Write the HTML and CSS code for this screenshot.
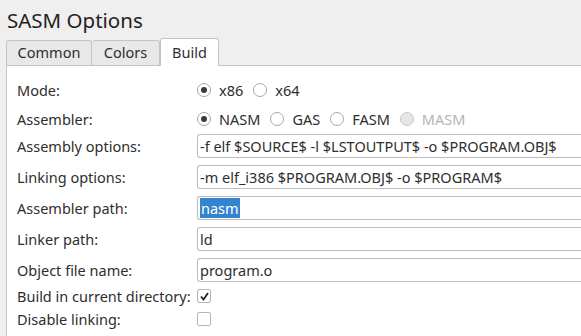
FILE: index.html
```html
<!DOCTYPE html>
<html>
<head>
<meta charset="utf-8">
<link rel="stylesheet" href="styles.css">
</head>
<body>
<div class="window">
  <h1 class="title">SASM Options</h1>
  <div class="tabs">
    <div class="tab">Common</div>
    <div class="tab">Colors</div>
    <div class="tab active">Build</div>
  </div>
  <div class="pane">
    <div class="form">
      <div class="label radio-row">Mode:</div>
      <div class="field radio-row">
        <span class="radio checked"></span><span class="opt">x86</span>
        <span class="radio"></span><span class="opt">x64</span>
      </div>

      <div class="label radio-row">Assembler:</div>
      <div class="field radio-row">
        <span class="radio checked"></span><span class="opt">NASM</span>
        <span class="radio"></span><span class="opt">GAS</span>
        <span class="radio"></span><span class="opt">FASM</span>
        <span class="radio disabled"></span><span class="opt disabled-text">MASM</span>
      </div>

      <div class="label input-row">Assembly options:</div>
      <div class="field input-row"><div class="input">-f elf $SOURCE$ -l $LSTOUTPUT$ -o $PROGRAM.OBJ$</div></div>

      <div class="label input-row">Linking options:</div>
      <div class="field input-row"><div class="input">-m elf_i386 $PROGRAM.OBJ$ -o $PROGRAM$</div></div>

      <div class="label input-row">Assembler path:</div>
      <div class="field input-row"><div class="input"><span class="selected">nasm</span></div></div>

      <div class="label input-row">Linker path:</div>
      <div class="field input-row"><div class="input">ld</div></div>

      <div class="label input-row">Object file name:</div>
      <div class="field input-row"><div class="input">program.o</div></div>

      <div class="label check-row">Build in current directory:</div>
      <div class="field check-row"><span class="checkbox checked"><svg width="11" height="11" viewBox="0 0 11 11"><path d="M2 5.5 L4.5 8.5 L9 2" fill="none" stroke="#222" stroke-width="1.8"/></svg></span></div>

      <div class="label check-row">Disable linking:</div>
      <div class="field check-row"><span class="checkbox"></span></div>
    </div>
  </div>
</div>
</body>
</html>
```
FILE: styles.css
```css
html, body {
  margin: 0;
  padding: 0;
  background: #efefef;
  overflow: hidden;
}
body {
  font-family: "Noto Sans", "DejaVu Sans", sans-serif;
  color: #2e2e2e;
  width: 581px;
  height: 336px;
}
.window {
  padding-left: 6px;
}
.title {
  margin: 0;
  height: 38px;
  font-size: 20.5px;
  font-weight: normal;
  line-height: 40px;
  padding-left: 1px;
  color: #222;
}
.tabs {
  display: flex;
  align-items: flex-end;
  height: 27px;
  font-size: 14.5px;
}
.tab {
  box-sizing: border-box;
  height: 25px;
  line-height: 23px;
  padding: 0;
  border: 1px solid #c4c4c4;
  border-bottom: none;
  border-radius: 3px 3px 0 0;
  background: #e8e8e8;
  color: #2e2e2e;
  text-align: center;
}
.tab + .tab {
  border-left: none;
}
.tab:nth-child(1) { width: 86px; }
.tab:nth-child(2) { width: 68px; }
.tab.active {
  width: 59px;
  height: 28px;
  line-height: 27px;
  background: #fff;
  border-left: 1px solid #c4c4c4;
  margin-bottom: -1px;
  position: relative;
  z-index: 1;
}
.pane {
  box-sizing: border-box;
  background: #fff;
  border: 1px solid #c4c4c4;
  border-right: none;
  border-bottom: none;
  height: 271px;
  padding: 9px 0 0 10px;
}
.form {
  display: grid;
  grid-template-columns: 180px 1fr;
  grid-template-rows: 29px 29px 31px 31px 31px 31px 31px 23px 23px;
  font-size: 14.5px;
}
.label {
  display: flex;
  align-items: center;
  white-space: nowrap;
}
.field {
  display: flex;
  align-items: center;
  min-width: 0;
}
.input-row.label { align-items: center; margin-top: 1px; height: 24px; }
.input-row.field { align-items: flex-start; padding-top: 1px; }
.check-row.label { align-items: flex-start; line-height: 16px; }
.check-row.field { align-items: flex-start; padding-top: 1px; }
.input {
  box-sizing: border-box;
  height: 24px;
  width: 420px;
  border: 1px solid #bdbdbd;
  border-right: none;
  border-radius: 3px 0 0 3px;
  background: #fff;
  padding-left: 2px;
  line-height: 22px;
  white-space: nowrap;
}
.selected {
  background: #3584cf;
  color: #fff;
  padding: 0 1px;
}
.radio {
  box-sizing: border-box;
  width: 14px;
  height: 14px;
  border-radius: 50%;
  border: 1px solid #a8a8a8;
  background: #fff;
  display: inline-flex;
  align-items: center;
  justify-content: center;
  margin-right: 8px;
}
.radio.checked::after {
  content: "";
  width: 6px;
  height: 6px;
  border-radius: 50%;
  background: #3a3a3a;
}
.radio.disabled {
  background: #e6e6e6;
  border-color: #c8c8c8;
}
.opt {
  margin-right: 10px;
}
.disabled-text {
  color: #b5b5b5;
}
.checkbox {
  box-sizing: border-box;
  width: 14px;
  height: 14px;
  border: 1px solid #b4b4b4;
  border-radius: 2px;
  background: #fff;
  display: inline-flex;
  align-items: center;
  justify-content: center;
}
```
